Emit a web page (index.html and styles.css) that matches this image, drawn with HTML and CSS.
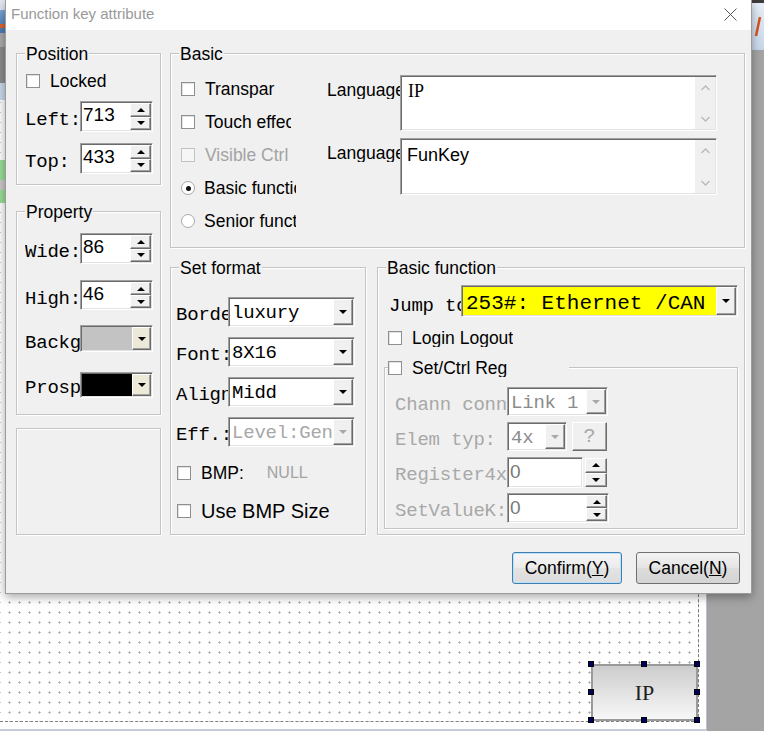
FILE: index.html
```html
<!DOCTYPE html>
<html>
<head>
<meta charset="utf-8">
<title>Function key attribute</title>
<link rel="stylesheet" href="styles.css">
</head>
<body>
<div class="screen">
  <div class="work">
    <div class="tbar"><span class="b1"></span><span class="b2"></span><span class="b3"></span><span class="b4"></span><span class="b5"></span></div>
    <div class="canvas">
      <div class="design"><span class="lmark"></span></div>
    </div>
  </div>
  <div class="side">
    <div class="side-top"><svg class="sicon" width="57" height="47" viewBox="0 0 57 47"><path d="M53 14 L49 33" stroke="#d6541f" stroke-width="2.5" fill="none"/></svg></div>
  </div>

  <div class="widget">IP<span class="h h1"></span><span class="h h2"></span><span class="h h3"></span><span class="h h4"></span><span class="h h5"></span><span class="h h6"></span><span class="h h7"></span><span class="h h8"></span></div>

  <div class="dialog">
    <div class="titlebar">
      <span class="title">Function key attribute</span>
      <svg class="close" width="13" height="13" viewBox="0 0 13 13"><path d="M0.5 0.5L12.5 12.5M12.5 0.5L0.5 12.5" stroke="#555" stroke-width="1" fill="none"/></svg>
    </div>
    <div class="dbody">
      <div class="main">
        <div class="lcol">
          <div class="group g-pos">
            <div class="legend">Position</div>
            <div class="chk c-locked"><span class="cb"></span><span class="tx">Locked</span></div>
            <div class="frow r-left"><span class="lbl mono">Left:</span>
              <div class="sunk spin w73"><span class="sval">713</span><span class="spinner"><i class="up"></i><i class="dn"></i></span></div>
            </div>
            <div class="frow r-top"><span class="lbl mono">Top:</span>
              <div class="sunk spin w73"><span class="sval">433</span><span class="spinner"><i class="up"></i><i class="dn"></i></span></div>
            </div>
          </div>
          <div class="group g-prop">
            <div class="legend">Property</div>
            <div class="frow r-wide"><span class="lbl mono">Wide:</span>
              <div class="sunk spin w73"><span class="sval">86</span><span class="spinner"><i class="up"></i><i class="dn"></i></span></div>
            </div>
            <div class="frow r-high"><span class="lbl mono">High:</span>
              <div class="sunk spin w73"><span class="sval">46</span><span class="spinner"><i class="up"></i><i class="dn"></i></span></div>
            </div>
            <div class="frow r-backg"><span class="lbl mono">Backg</span>
              <div class="sunk dd w73"><span class="dval fill-gray"></span><span class="ddb beige"></span></div>
            </div>
            <div class="frow r-prosp"><span class="lbl mono">Prosp</span>
              <div class="sunk dd w73"><span class="dval fill-black"></span><span class="ddb beige"></span></div>
            </div>
          </div>
          <div class="blank"></div>
        </div>

        <div class="rcol">
          <div class="group g-basic">
            <div class="legend">Basic</div>
            <div class="bas-body">
              <div class="checks">
                <div class="chk w-trans"><span class="cb"></span><span class="tx">Transparent</span></div>
                <div class="chk w-touch"><span class="cb"></span><span class="tx">Touch effect</span></div>
                <div class="chk dis"><span class="cb"></span><span class="tx">Visible Ctrl</span></div>
                <div class="chk w-rad"><span class="rb on"></span><span class="tx">Basic function</span></div>
                <div class="chk w-rad"><span class="rb"></span><span class="tx">Senior function</span></div>
              </div>
              <div class="langs">
                <div class="lrow"><span class="llbl">Language</span>
                  <div class="sunk tarea"><span class="ttxt serif">IP</span>
                    <span class="vsb"><svg width="9" height="6" viewBox="0 0 9 6"><path d="M0.5 5L4.5 1L8.5 5" stroke="#b9b9b9" stroke-width="1.3" fill="none"/></svg><svg width="9" height="6" viewBox="0 0 9 6"><path d="M0.5 1L4.5 5L8.5 1" stroke="#b9b9b9" stroke-width="1.3" fill="none"/></svg></span>
                  </div>
                </div>
                <div class="lrow r2"><span class="llbl">Language</span>
                  <div class="sunk tarea"><span class="ttxt sans">FunKey</span>
                    <span class="vsb"><svg width="9" height="6" viewBox="0 0 9 6"><path d="M0.5 5L4.5 1L8.5 5" stroke="#b9b9b9" stroke-width="1.3" fill="none"/></svg><svg width="9" height="6" viewBox="0 0 9 6"><path d="M0.5 1L4.5 5L8.5 1" stroke="#b9b9b9" stroke-width="1.3" fill="none"/></svg></span>
                  </div>
                </div>
              </div>
            </div>
          </div>

          <div class="row2">
            <div class="group g-fmt">
              <div class="legend">Set format</div>
              <div class="frow f1"><span class="lbl mono">Borde</span>
                <div class="sunk dd w127"><span class="dval mono">luxury</span><span class="ddb"></span></div>
              </div>
              <div class="frow fn"><span class="lbl mono">Font:</span>
                <div class="sunk dd w127"><span class="dval mono">8X16</span><span class="ddb"></span></div>
              </div>
              <div class="frow fn"><span class="lbl mono">Align</span>
                <div class="sunk dd w127"><span class="dval mono">Midd</span><span class="ddb"></span></div>
              </div>
              <div class="frow fn"><span class="lbl mono">Eff.:</span>
                <div class="sunk dd w127"><span class="dval mono gray">Level:General</span><span class="ddb dis"></span></div>
              </div>
              <div class="chk c-bmp"><span class="cb"></span><span class="tx">BMP:</span><span class="null">NULL</span></div>
              <div class="chk c-use"><span class="cb"></span><span class="tx">Use BMP Size</span></div>
            </div>

            <div class="group g-func">
              <div class="legend">Basic function</div>
              <div class="frow r-jump"><span class="lbl mono">Jump to</span>
                <div class="sunk dd w277"><span class="dval jump">253#: Ethernet /CAN</span><span class="ddb"></span></div>
              </div>
              <div class="chk c-login"><span class="cb"></span><span class="tx">Login Logout</span></div>
              <div class="igroup">
                <div class="ileg"><span class="cb"></span><span class="tx">Set/Ctrl Reg</span></div>
                <div class="frow i1"><span class="lbl mono gray">Chann conn</span>
                  <div class="sunk dd w101"><span class="dval mono gray2">Link 1</span><span class="ddb dis"></span></div>
                </div>
                <div class="frow i2"><span class="lbl mono gray">Elem typ:</span>
                  <div class="sunk dd w60"><span class="dval mono gray2">4x</span><span class="ddb dis"></span></div>
                  <div class="qbtn">?</div>
                </div>
                <div class="frow i3"><span class="lbl mono gray">Register4x</span>
                  <div class="sunk spin w76"><span class="sval gval">0</span></div>
                  <span class="spinner solo"><i class="up"></i><i class="dn"></i></span>
                </div>
                <div class="frow i4"><span class="lbl mono gray">SetValueK:</span>
                  <div class="sunk spin w102"><span class="sval gval">0</span><span class="spinner"><i class="up"></i><i class="dn"></i></span></div>
                </div>
              </div>
            </div>
          </div>
        </div>
      </div>
      <div class="btns">
        <div class="btn def">Confirm(<u>Y</u>)</div>
        <div class="btn cancel">Cancel(<u>N</u>)</div>
      </div>
    </div>
  </div>
</div>
</body>
</html>
```

FILE: styles.css
```css
* { box-sizing: border-box; }
html, body { margin: 0; padding: 0; }
body {
  width: 764px; height: 731px; overflow: hidden;
  background: #a4a4a4;
  font-family: "Liberation Sans", Arial, sans-serif;
  color: #000;
}
.screen { position: relative; width: 764px; height: 731px; display: flex; overflow: hidden; }

/* background application */
.work { width: 707px; height: 731px; flex: none; display: flex; flex-direction: column; }
.tbar { height: 100px; flex: none; display: flex; flex-direction: column; }
.tbar span { display: block; }
.b1 { height: 10px; background: #e3e9f0; }
.b2 { height: 23px; background: linear-gradient(#7ea6d6 0, #5a86bf 60%, #e0622c 60%, #e0622c 80%, #4d7cb8 80%); }
.b3 { height: 14px; background: #a9a9a9; }
.b4 { height: 36px; background: #8c8c8c; }
.b5 { height: 17px; background: #c9d9ec; }
.canvas {
  flex: 1; display: flex; background: #fff;
  padding: 0 7px 7px 0;
  border-right: 1px solid #b7c2ce;
  border-bottom: 2px solid #c3ccd8;
}
.design {
  flex: 1;
  border-right: 1px dashed #7d7d7d;
  border-bottom: 1px dashed #7d7d7d;
  background-color: #fff;
  background-image: radial-gradient(circle at 5.5px 5.5px, #a6a6a6 0.9px, transparent 1.2px);
  background-size: 10px 10px;
  background-position: 4px 7px;
}
.lmark {
  display: block; width: 5px; height: 43px; margin-top: 60px;
  background: linear-gradient(#96df96 0, #96df96 20px, #c9c9c9 20px, #c9c9c9 30px, #96df96 30px);
}
.side { flex: 1; display: flex; flex-direction: column; background: #a4a4a4; }
.side-top { height: 50px; border-top: 3px solid #3c3c3c; background: linear-gradient(#e6eef8, #c7d7ea); }
.sicon { display: block; }

/* selected widget on canvas */
.widget {
  position: absolute; left: 591px; top: 664px; width: 107px; height: 57px;
  border: 2px solid #9a9a9a;
  background: linear-gradient(#cdcdcd, #f7f7f7);
  display: flex; align-items: center; justify-content: center;
  font: 22px "Liberation Serif", serif; color: #1e1e1e;
}
.h { position: absolute; width: 6px; height: 6px; background: #00005e; border: 1px solid #000; }
.h1 { left: -5px; top: -5px; }
.h2 { left: 48px; top: -5px; }
.h3 { left: 101px; top: -5px; }
.h4 { left: -5px; top: 23px; }
.h5 { left: 101px; top: 23px; }
.h6 { left: -5px; top: 51px; }
.h7 { left: 48px; top: 51px; }
.h8 { left: 101px; top: 51px; }

/* dialog window */
.dialog {
  position: absolute; left: 5px; top: 0; width: 747px; height: 594px;
  border: 1px solid #9b9b9b; border-top: none;
  background: #f0f0f0;
  box-shadow: 0 3px 9px rgba(0,0,0,.35);
  display: flex; flex-direction: column;
}
.titlebar { height: 30px; flex: none; background: #fff; display: flex; align-items: flex-start; padding-left: 5px; }
.title { font-size: 15px; line-height: 17px; margin-top: 5px; color: #999; }
.close { margin: 8px 14px 0 auto; display: block; }

.dbody { flex: 1; display: flex; flex-direction: column; padding: 23px 6px 0 10px; }
.main { display: flex; gap: 9px; height: 482px; }
.lcol { width: 145px; flex: none; display: flex; flex-direction: column; }
.rcol { flex: 1; display: flex; flex-direction: column; }

.group {
  border: 1px solid #c4c4c4;
  box-shadow: inset 1px 1px 0 #fff, 1px 1px 0 #fff;
  display: flex; flex-direction: column;
}
.legend {
  align-self: flex-start; height: 18px; line-height: 18px; font-size: 17.5px;
  margin: -9px 0 0 8px; padding: 0 1px; background: #f0f0f0;
}

.mono { font-family: "Liberation Mono", "Courier New", monospace; font-size: 19px; line-height: 20px; letter-spacing: -0.2px; }

/* check boxes / radios */
.chk { display: flex; align-items: center; height: 18px; font-size: 17.5px; line-height: 18px; }
.cb { width: 14px; height: 14px; flex: none; border: 1px solid #8e8f8f; background: #fff; box-shadow: inset 1px 1px 0 #e2e2e2; margin-right: 10px; }
.rb { width: 14px; height: 14px; flex: none; border-radius: 50%; border: 1px solid #a8a8a8; background: #fff; margin-right: 9px; display: flex; align-items: center; justify-content: center; }
.rb.on::after { content: ""; width: 5px; height: 5px; border-radius: 50%; background: #111; }
.tx { white-space: nowrap; overflow: hidden; min-width: 0; }
.chk.dis .cb { border-color: #c2c2c2; background: #f6f6f6; box-shadow: none; }
.chk.dis .tx { color: #a3a3a3; }

/* rows */
.frow { display: flex; align-items: flex-start; }
.lbl { width: 55px; flex: none; white-space: nowrap; overflow: hidden; margin-top: 9px; }
.gray { color: #a8a8a8; }
.gray2 { color: #8c8c8c; }

/* sunken controls */
.sunk {
  border: 1px solid; border-color: #a0a0a0 #fff #fff #a0a0a0;
  padding: 1px;
  box-shadow: inset 1px 1px 0 #6b6b6b, inset -1px -1px 0 #e3e3e3;
  background: #fff;
  display: flex; height: 100%;
}
.w73 { width: 73px; }
.w76 { width: 76px; }
.w101 { width: 101px; }
.w102 { width: 102px; }
.w60 { width: 60px; }
.w127 { width: 127px; }
.w277 { width: 277px; }

.sval { flex: 1; min-width: 0; font-size: 19px; line-height: 20px; padding: 2px 0 0 1px; white-space: nowrap; overflow: hidden; }
.gval { color: #7a7a7a; padding-top: 3px; }
.spinner { width: 21px; flex: none; display: flex; flex-direction: column; }
.spinner i {
  flex: 1; display: flex; align-items: center; justify-content: center;
  background: #f0f0f0;
  border: 1px solid; border-color: #fff #6b6b6b #6b6b6b #fff;
  box-shadow: inset -1px -1px 0 #a0a0a0;
}
.spinner i::before { content: ""; border-left: 4px solid transparent; border-right: 4px solid transparent; }
.spinner .up::before { border-bottom: 4px solid #000; }
.spinner .dn::before { border-top: 4px solid #000; }
.spinner.solo { width: 22px; height: 29px; margin: 1px 0 0 2px; }

.dval { flex: 1; min-width: 0; white-space: nowrap; overflow: hidden; padding: 4px 0 0 2px; }
.fill-gray { background: #c3c3c3; }
.fill-black { background: #000; }
.jump { background: #ffff00; font-family: "Liberation Mono", "Courier New", monospace; font-size: 21px; line-height: 22px; padding: 6px 0 0 3px; }
.ddb {
  width: 20px; flex: none; display: flex; align-items: center; justify-content: center;
  background: #f0f0f0;
  border: 1px solid; border-color: #fff #6b6b6b #6b6b6b #fff;
  box-shadow: inset -1px -1px 0 #a0a0a0;
}
.ddb::before { content: ""; border-left: 4px solid transparent; border-right: 4px solid transparent; border-top: 4px solid #000; }
.ddb.beige { background: #ece9d8; width: 19px; }
.ddb.dis::before { border-top-color: #a8a8a8; }

/* left column */
.g-pos { height: 132px; }
.c-locked { margin: 9px 0 0 9px; }
.c-locked .cb { margin-right: 10px; }
.r-left { height: 31px; margin: 11px 0 0 8px; }
.r-top { height: 31px; margin: 11px 0 0 8px; }
.g-prop { height: 204px; margin-top: 26px; }
.r-wide { height: 31px; margin: 12px 0 0 8px; }
.r-high { height: 30px; margin: 16px 0 0 8px; }
.r-backg { height: 27px; margin: 15px 0 0 8px; }
.r-backg .lbl { margin-top: 8px; }
.r-prosp { height: 26px; margin: 20px 0 0 8px; }
.r-prosp .lbl { margin-top: 6px; }
.blank {
  height: 107px; margin-top: 13px;
  border: 1px solid #c4c4c4;
  box-shadow: inset 1px 1px 0 #fff, 1px 1px 0 #fff;
}

/* basic group */
.g-basic { height: 195px; }
.bas-body { display: flex; margin: 12px 0 0 10px; }
.checks { width: 116px; flex: none; padding-top: 5px; display: flex; flex-direction: column; gap: 15px; }
.w-trans { width: 94px; }
.w-touch { width: 110px; }
.w-rad { width: 115px; }
.langs { margin-left: 30px; display: flex; flex-direction: column; gap: 7px; }
.lrow { display: flex; align-items: flex-start; height: 56px; }
.lrow.r2 { height: 57px; }
.llbl { width: 73px; flex: none; overflow: hidden; white-space: nowrap; font-size: 17.5px; line-height: 18px; margin-top: 6px; }
.tarea { width: 317px; }
.ttxt { flex: 1; white-space: nowrap; }
.ttxt.serif { font: 18px/20px "Liberation Serif", serif; padding: 4px 0 0 6px; }
.ttxt.sans { font-size: 18px; line-height: 20px; padding: 5px 0 0 5px; }
.vsb { width: 20px; flex: none; background: #f0f0f0; display: flex; flex-direction: column; align-items: center; justify-content: space-between; padding: 8px 0 7px; }
.vsb svg { display: block; }

/* set format + basic function */
.row2 { display: flex; gap: 11px; margin-top: 19px; height: 268px; }
.g-fmt { width: 196px; flex: none; }
.g-func { flex: 1; }
.g-fmt .frow { height: 30px; margin: 10px 0 0 5px; }
.g-fmt .frow.f1 { margin-top: 20px; }
.g-fmt .lbl { width: 52px; margin-top: 8px; }
.c-bmp { margin: 17px 0 0 6px; }
.null { margin-left: 23px; font-size: 16px; color: #a3a3a3; }
.c-use { margin: 18px 0 0 6px; height: 22px; font-size: 20px; line-height: 22px; }

.r-jump { height: 32px; margin: 8px 0 0 11px; }
.r-jump .lbl { width: 72px; margin-top: 11px; }
.c-login { margin: 12px 0 0 10px; }
.igroup {
  height: 162px; margin: 20px 6px 0 6px;
  border: 1px solid #c4c4c4;
  box-shadow: inset 1px 1px 0 #fff, 1px 1px 0 #fff;
  display: flex; flex-direction: column;
}
.ileg {
  align-self: flex-start; width: 181px; height: 18px; margin: -9px 0 0 3px;
  background: #f0f0f0; display: flex; align-items: center; font-size: 17.5px; line-height: 18px;
}
.igroup .frow { margin-left: 10px; }
.igroup .lbl { width: 112px; margin-top: 8px; }
.i1 { height: 29px; margin-top: 10px; }
.i2 { height: 29px; margin-top: 6px; }
.i3 { height: 31px; margin-top: 6px; }
.i4 { height: 30px; margin-top: 5px; }
.qbtn {
  width: 35px; height: 29px; margin-left: 5px;
  background: #f0f0f0;
  border: 1px solid; border-color: #fff #6b6b6b #6b6b6b #fff;
  box-shadow: inset -1px -1px 0 #a0a0a0;
  font: 20px/27px "Liberation Mono", monospace; text-align: center; color: #a8a8a8;
}

/* buttons */
.btns { display: flex; justify-content: flex-end; gap: 14px; margin-top: 17px; padding-right: 5px; }
.btn {
  height: 32px; border: 1px solid #707070; border-radius: 3px;
  background: linear-gradient(#f3f3f3, #e4e4e4 50%, #dcdcdc 51%, #d4d4d4);
  font-size: 17.5px; line-height: 30px; text-align: center;
}
.btn.def { width: 110px; border-color: #3c7fb1; box-shadow: inset 0 0 0 1px #bde0f7; background: linear-gradient(#f6f6f6, #ebebeb 50%, #e3e3e3 51%, #dcdcdc); }
.btn.cancel { width: 104px; }
.btn u { text-decoration: underline; }
```
